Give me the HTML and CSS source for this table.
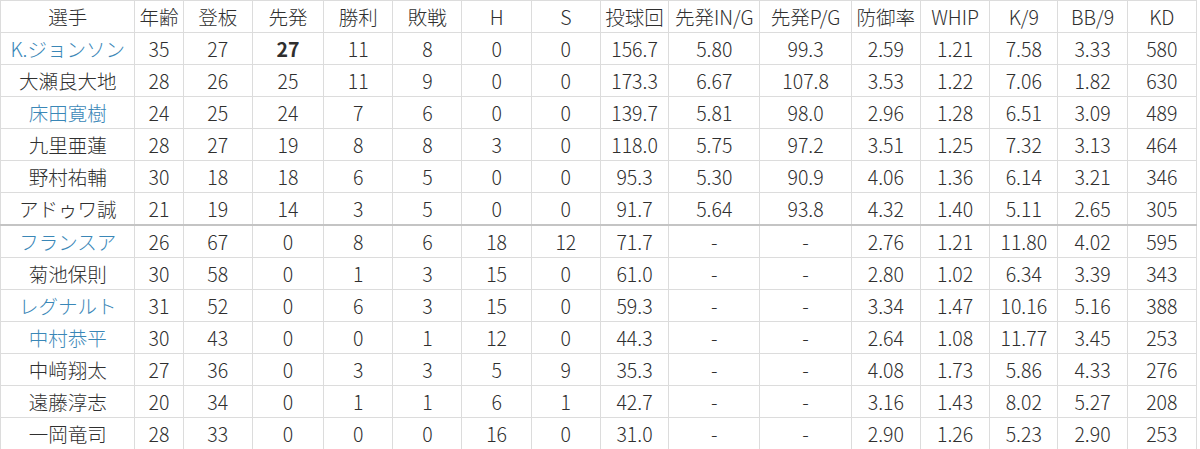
FILE: index.html
```html
<!DOCTYPE html>
<html lang="ja">
<head>
<meta charset="utf-8">
<link rel="stylesheet" href="styles.css">
</head>
<body>
<table class="stats">
<colgroup>
<col class="c-name"><col class="c-age"><col class="c-n"><col class="c-n2"><col class="c-n"><col class="c-n"><col class="c-n"><col class="c-n"><col class="c-ip"><col class="c-w"><col class="c-w"><col class="c-n"><col class="c-n"><col class="c-ip"><col class="c-n"><col class="c-n">
</colgroup>
<thead>
<tr><th>選手</th><th>年齢</th><th>登板</th><th>先発</th><th>勝利</th><th>敗戦</th><th>H</th><th>S</th><th>投球回</th><th>先発IN/G</th><th>先発P/G</th><th>防御率</th><th>WHIP</th><th>K/9</th><th>BB/9</th><th>KD</th></tr>
</thead>
<tbody>
<tr><td class="link">K.ジョンソン</td><td>35</td><td>27</td><td class="b">27</td><td>11</td><td>8</td><td>0</td><td>0</td><td>156.7</td><td>5.80</td><td>99.3</td><td>2.59</td><td>1.21</td><td>7.58</td><td>3.33</td><td>580</td></tr>
<tr><td>大瀬良大地</td><td>28</td><td>26</td><td>25</td><td>11</td><td>9</td><td>0</td><td>0</td><td>173.3</td><td>6.67</td><td>107.8</td><td>3.53</td><td>1.22</td><td>7.06</td><td>1.82</td><td>630</td></tr>
<tr><td class="link">床田寛樹</td><td>24</td><td>25</td><td>24</td><td>7</td><td>6</td><td>0</td><td>0</td><td>139.7</td><td>5.81</td><td>98.0</td><td>2.96</td><td>1.28</td><td>6.51</td><td>3.09</td><td>489</td></tr>
<tr><td>九里亜蓮</td><td>28</td><td>27</td><td>19</td><td>8</td><td>8</td><td>3</td><td>0</td><td>118.0</td><td>5.75</td><td>97.2</td><td>3.51</td><td>1.25</td><td>7.32</td><td>3.13</td><td>464</td></tr>
<tr><td>野村祐輔</td><td>30</td><td>18</td><td>18</td><td>6</td><td>5</td><td>0</td><td>0</td><td>95.3</td><td>5.30</td><td>90.9</td><td>4.06</td><td>1.36</td><td>6.14</td><td>3.21</td><td>346</td></tr>
<tr class="split"><td>アドゥワ誠</td><td>21</td><td>19</td><td>14</td><td>3</td><td>5</td><td>0</td><td>0</td><td>91.7</td><td>5.64</td><td>93.8</td><td>4.32</td><td>1.40</td><td>5.11</td><td>2.65</td><td>305</td></tr>
<tr><td class="link">フランスア</td><td>26</td><td>67</td><td>0</td><td>8</td><td>6</td><td>18</td><td>12</td><td>71.7</td><td>-</td><td>-</td><td>2.76</td><td>1.21</td><td>11.80</td><td>4.02</td><td>595</td></tr>
<tr><td>菊池保則</td><td>30</td><td>58</td><td>0</td><td>1</td><td>3</td><td>15</td><td>0</td><td>61.0</td><td>-</td><td>-</td><td>2.80</td><td>1.02</td><td>6.34</td><td>3.39</td><td>343</td></tr>
<tr><td class="link">レグナルト</td><td>31</td><td>52</td><td>0</td><td>6</td><td>3</td><td>15</td><td>0</td><td>59.3</td><td>-</td><td>-</td><td>3.34</td><td>1.47</td><td>10.16</td><td>5.16</td><td>388</td></tr>
<tr><td class="link">中村恭平</td><td>30</td><td>43</td><td>0</td><td>0</td><td>1</td><td>12</td><td>0</td><td>44.3</td><td>-</td><td>-</td><td>2.64</td><td>1.08</td><td>11.77</td><td>3.45</td><td>253</td></tr>
<tr><td>中﨑翔太</td><td>27</td><td>36</td><td>0</td><td>3</td><td>3</td><td>5</td><td>9</td><td>35.3</td><td>-</td><td>-</td><td>4.08</td><td>1.73</td><td>5.86</td><td>4.33</td><td>276</td></tr>
<tr><td>遠藤淳志</td><td>20</td><td>34</td><td>0</td><td>1</td><td>1</td><td>6</td><td>1</td><td>42.7</td><td>-</td><td>-</td><td>3.16</td><td>1.43</td><td>8.02</td><td>5.27</td><td>208</td></tr>
<tr><td>一岡竜司</td><td>28</td><td>33</td><td>0</td><td>0</td><td>0</td><td>16</td><td>0</td><td>31.0</td><td>-</td><td>-</td><td>2.90</td><td>1.26</td><td>5.23</td><td>2.90</td><td>253</td></tr>
</tbody>
</table>
</body>
</html>
```
FILE: styles.css
```css
html, body {
  margin: 0;
  padding: 0;
  background: #fff;
}
.stats {
  border-collapse: collapse;
  table-layout: fixed;
  width: 1197px;
  font-family: "Noto Sans CJK JP", "Noto Sans", sans-serif;
  font-size: 19.5px;
  font-weight: 300;
  color: #2f2f2f;
}
.c-name { width: 134px; }
.c-age { width: 48px; }
.c-n { width: 69px; }
.c-n2 { width: 71px; }
.c-ip { width: 68px; }
.c-w { width: 91px; }
.stats th,
.stats td {
  border: 1px solid #dcdcdc;
  height: 31px;
  padding: 0;
  text-align: center;
  vertical-align: middle;
  font-weight: 300;
  line-height: 31px;
  white-space: nowrap;
  overflow: hidden;
}
.stats .link { color: #3a87b7; }
.stats .b { font-weight: bold; }
.stats tr.split td { border-bottom: 2px solid #c4c4c4; }
```
